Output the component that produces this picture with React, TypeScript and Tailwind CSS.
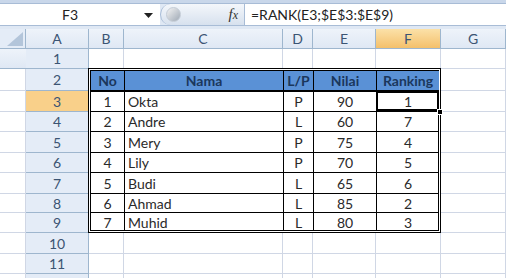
import React from 'react'

const data = [
    { no: 1, nama: 'Okta', lp: 'P', nilai: 90, rank: 1 },
    { no: 2, nama: 'Andre', lp: 'L', nilai: 60, rank: 7 },
    { no: 3, nama: 'Mery', lp: 'P', nilai: 75, rank: 4 },
    { no: 4, nama: 'Lily', lp: 'P', nilai: 70, rank: 5 },
    { no: 5, nama: 'Budi', lp: 'L', nilai: 65, rank: 6 },
    { no: 6, nama: 'Ahmad', lp: 'L', nilai: 85, rank: 2 },
    { no: 7, nama: 'Muhid', lp: 'L', nilai: 80, rank: 3 },
]

const cols = ['A', 'B', 'C', 'D', 'E', 'F', 'G']
const rows = [1, 2, 3, 4, 5, 6, 7, 8, 9, 10, 11, 12]

function ColHeader({ label, active }: { label: string; active?: boolean }) {
    return (
        <div
            className={`flex items-center justify-center border-r border-b border-[#9eb6ce] text-[14px] text-[#3b5473] ${active ? 'bg-gradient-to-b from-[#fbe1a8] to-[#f4c06a]' : 'bg-gradient-to-b from-[#eef3fa] to-[#dfe8f4]'}`}
        >
            {label}
        </div>
    )
}

function RowHeader({ n, active }: { n: number; active?: boolean }) {
    return (
        <div
            className={`flex items-center justify-center border-r border-b border-[#9eb6ce] text-[14px] text-[#3b5473] ${active ? 'bg-[#f9d08a]' : 'bg-[#e4ecf7]'}`}
        >
            {n < 12 ? n : ''}
        </div>
    )
}

function Cell() {
    return <div className="border-r border-b border-[#d0d7e5] bg-white" />
}

export default function App() {
    return (
        <div className="w-[506px] h-[278px] overflow-hidden bg-[#dfe8f4] font-['Lato',sans-serif] select-none">
            {/* formula bar */}
            <div className="h-[3px] bg-[#c9d7ea]" />
            <div className="flex h-[23px] items-stretch border-y border-[#a8bcd6]">
                <div className="w-[160px] flex items-center bg-white relative">
                    <span className="w-[140px] text-center text-[14px] text-[#222]">F3</span>
                    <svg width="9" height="6" viewBox="0 0 9 6" className="absolute left-[144px] top-[9px]">
                        <path d="M0 0H9L4.5 5Z" fill="#222" />
                    </svg>
                </div>
                <div className="w-[84px] flex items-center bg-gradient-to-b from-[#f4f7fb] to-[#d7e1ee] rounded-l-full border-l border-[#a8bcd6] relative">
                    <div className="ml-[5px] w-[15px] h-[15px] rounded-full bg-gradient-to-br from-[#f4f4f4] to-[#9fa9b5] border border-[#c4ccd6]" />
                    <span className="ml-auto mr-[6px] font-['Liberation_Serif',serif] italic text-[15px] text-[#333]">
                        f<span className="text-[12px]">x</span>
                    </span>
                </div>
                <div className="flex-1 flex items-center bg-white border-l border-[#a8bcd6] pl-[6px] text-[14px] text-[#222]">
                    =RANK(E3;$E$3:$E$9)
                </div>
            </div>
            <div className="h-[3px] bg-[#dfe8f4]" />

            {/* sheet */}
            <div className="grid grid-cols-[26px_63px_35px_159px_30px_63px_65px_65px] grid-rows-[20px_20px_22px_21px_20px_21px_20px_21px_19px_20px_21px_20px_20px] bg-white">
                {/* corner */}
                <div className="border-r border-b border-[#9eb6ce] bg-[#e4ecf7] flex items-end justify-end p-[2px]">
                    <svg width="16" height="14" viewBox="0 0 16 14">
                        <path d="M16 0V14H0Z" fill="#b3c5da" />
                    </svg>
                </div>
                {cols.map((c) => (
                    <ColHeader key={c} label={c} active={c === 'F'} />
                ))}
                <div className="border-b border-[#9eb6ce] bg-gradient-to-b from-[#eef3fa] to-[#dfe8f4]" />

                {/* table B2:F9 */}
                <div className="col-start-3 col-end-8 row-start-3 row-end-11 -ml-px -mt-px relative z-10 border-[3px] border-double border-black grid grid-cols-[34px_159px_30px_63px_62px] grid-rows-[21px_20px_20px_21px_20px_21px_19px_18px] bg-white text-[14px] text-[#2a2a2a]">
                    {['No', 'Nama', 'L/P', 'Nilai', 'Ranking'].map((h, i) => (
                        <div
                            key={h}
                            className={`flex items-center justify-center bg-[#5a91d6] font-bold text-[#1b375c] border-b-2 border-black ${i < 4 ? 'border-r border-r-black' : ''}`}
                        >
                            {h}
                        </div>
                    ))}
                    {data.map((d, ri) => {
                        const last = ri === data.length - 1
                        const b = last ? '' : 'border-b border-black'
                        return (
                            <React.Fragment key={d.no}>
                                <div className={`flex items-center justify-center border-r border-black ${b}`}>{d.no}</div>
                                <div className={`flex items-center pl-[3px] border-r border-black ${b}`}>{d.nama}</div>
                                <div className={`flex items-center justify-center border-r border-black ${b}`}>{d.lp}</div>
                                <div className={`flex items-center justify-center border-r border-black ${b}`}>{d.nilai}</div>
                                <div className={`flex items-center justify-center ${b} relative`}>
                                    {ri === 0 && (
                                        <>
                                            <div className="absolute -left-px -top-px right-0 bottom-0 border-2 border-black" />
                                            <div className="absolute -right-[4px] -bottom-[4px] w-[6px] h-[6px] bg-black border border-white" />
                                        </>
                                    )}
                                    {d.rank}
                                </div>
                            </React.Fragment>
                        )
                    })}
                </div>

                {rows.map((r) => {
                    const inTable = r >= 2 && r <= 9
                    return (
                        <React.Fragment key={r}>
                            <RowHeader n={r} active={r === 3} />
                            <Cell />
                            {!inTable && (
                                <>
                                    <Cell />
                                    <Cell />
                                    <Cell />
                                    <Cell />
                                    <Cell />
                                </>
                            )}
                            <Cell />
                        </React.Fragment>
                    )
                })}
            </div>
        </div>
    )
}
